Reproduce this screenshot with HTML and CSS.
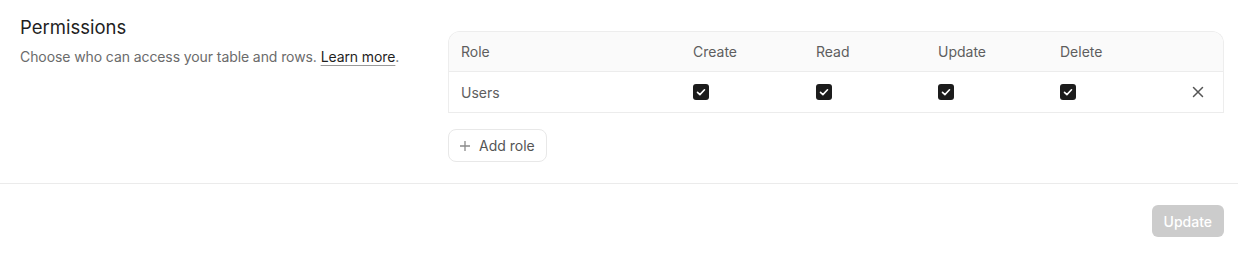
FILE: index.html
```html
<!DOCTYPE html>
<html lang="en">
<head>
  <meta charset="UTF-8">
  <title>Permissions</title>
  <link rel="stylesheet" href="styles.css">
</head>
<body>
  <div class="section">
    <div class="section-info">
      <h2>Permissions</h2>
      <p>Choose who can access your table and rows. <a href="#">Learn more</a>.</p>
    </div>

    <div class="section-body">
      <div class="perm-table">
        <div class="perm-row perm-head">
          <div>Role</div>
          <div>Create</div>
          <div>Read</div>
          <div>Update</div>
          <div>Delete</div>
          <div></div>
        </div>
        <div class="perm-row">
          <div>Users</div>
          <div><span class="check"><svg viewBox="0 0 16 16"><path d="M4.5 8.3l2.4 2.3 4.6-4.8"/></svg></span></div>
          <div><span class="check"><svg viewBox="0 0 16 16"><path d="M4.5 8.3l2.4 2.3 4.6-4.8"/></svg></span></div>
          <div><span class="check"><svg viewBox="0 0 16 16"><path d="M4.5 8.3l2.4 2.3 4.6-4.8"/></svg></span></div>
          <div><span class="check"><svg viewBox="0 0 16 16"><path d="M4.5 8.3l2.4 2.3 4.6-4.8"/></svg></span></div>
          <div class="remove"><svg viewBox="0 0 12 12"><path d="M1.5 1.5l9 9M10.5 1.5l-9 9"/></svg></div>
        </div>
      </div>

      <button class="add-role">
        <svg viewBox="0 0 12 12"><path d="M6 1v10M1 6h10"/></svg>
        Add role
      </button>
    </div>
  </div>

  <div class="footer">
    <button class="btn-update" disabled>Update</button>
  </div>
</body>
</html>
```

FILE: styles.css
```css
* {
  margin: 0;
  padding: 0;
  box-sizing: border-box;
}

body {
  font-family: Inter, "Noto Sans", sans-serif;
  background: #fff;
  color: #1f1f1f;
}

/* Section */
.section {
  display: flex;
  padding: 15px 14px 21px 20px;
  border-bottom: 1px solid #ebebeb;
}

.section-info {
  width: 428px;
  flex-shrink: 0;
}

.section-info h2 {
  font-size: 18.5px;
  font-weight: 400;
  line-height: 25px;
  color: #1f1f1f;
}

.section-info p {
  margin-top: 7px;
  font-size: 14px;
  line-height: 20px;
  letter-spacing: -0.09px;
  color: #6b6b6b;
}

.section-info a {
  color: #1f1f1f;
  text-decoration: underline;
  text-underline-offset: 3px;
  text-decoration-color: #9a9a9a;
}

.section-body {
  flex: 1;
  padding-top: 16px;
}

/* Table */
.perm-table {
  border: 1px solid #ededed;
  border-bottom: none;
  border-radius: 12px 12px 0 0;
  overflow: hidden;
}

.perm-row {
  display: grid;
  grid-template-columns: 232px 123px 122px 122px 1fr 20px;
  align-items: center;
  height: 41px;
  padding: 0 12px 0 12px;
  font-size: 14px;
  color: #5e5e5e;
  border-bottom: 1px solid #ececec;
}

.perm-head {
  height: 40px;
  background: #fafafa;
}

.check {
  display: block;
  width: 16px;
  height: 16px;
  border-radius: 3px;
  background: #1c1c1c;
}

.check svg {
  display: block;
  width: 16px;
  height: 16px;
  fill: none;
  stroke: #fff;
  stroke-width: 1.6;
  stroke-linecap: round;
  stroke-linejoin: round;
}

.remove svg {
  display: block;
  width: 12px;
  height: 12px;
  margin-left: 1px;
  fill: none;
  stroke: #555;
  stroke-width: 1.5;
  stroke-linecap: round;
}

/* Add role */
.add-role {
  display: inline-flex;
  align-items: center;
  gap: 8px;
  margin-top: 16px;
  height: 33px;
  padding: 0 11px 0 10px;
  border: 1px solid #e8e8e8;
  border-radius: 8px;
  background: #fff;
  font-family: inherit;
  font-size: 14px;
  color: #555;
  cursor: pointer;
}

.add-role svg {
  width: 12px;
  height: 12px;
  fill: none;
  stroke: #8a8a8a;
  stroke-width: 1.3;
}

/* Footer */
.footer {
  display: flex;
  justify-content: flex-end;
  padding: 21px 14px 0 0;
}

.btn-update {
  height: 32px;
  padding: 0 12px;
  border: none;
  border-radius: 6px;
  background: #cccccc;
  color: #fff;
  font-family: inherit;
  font-size: 14px;
  font-weight: 500;
}
```
